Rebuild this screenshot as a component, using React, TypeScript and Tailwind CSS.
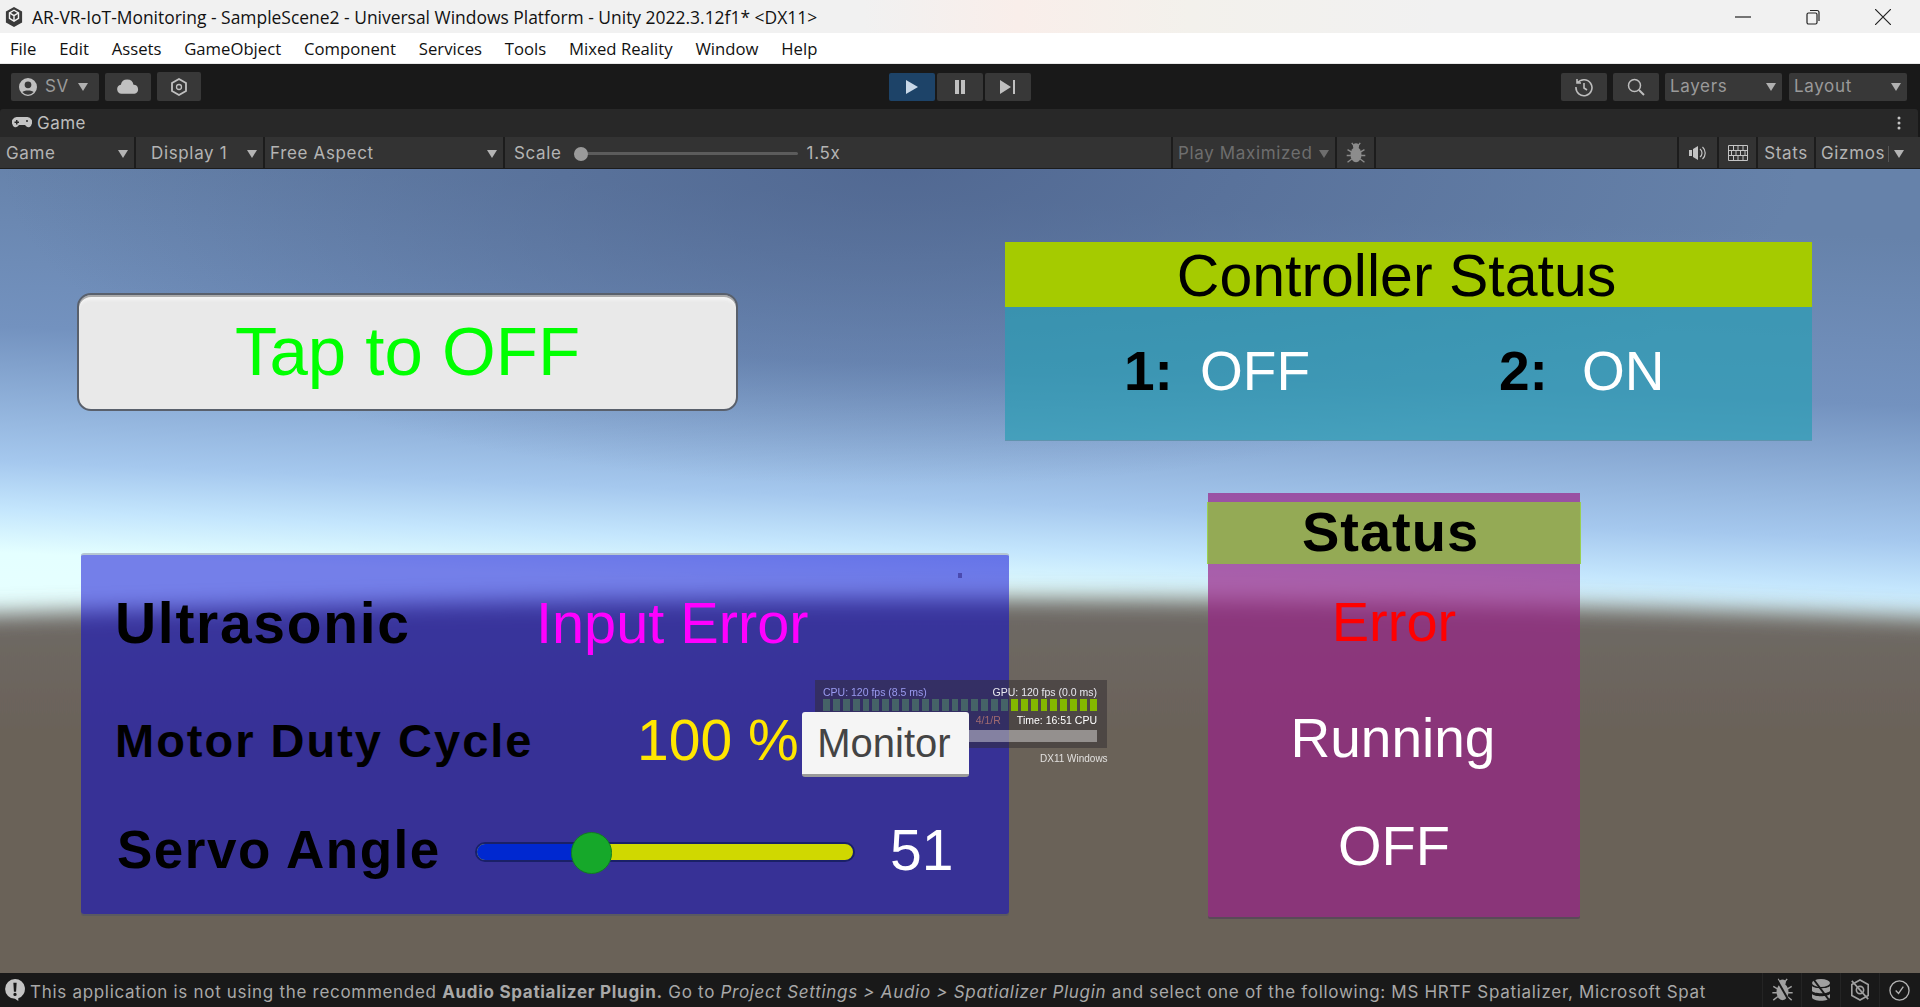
import type { ReactNode } from 'react';

const MENU = ['File', 'Edit', 'Assets', 'GameObject', 'Component', 'Services', 'Tools', 'Mixed Reality', 'Window', 'Help'];

function Caret({ className = '' }: { className?: string }) {
  return (
    <svg viewBox="0 0 10 8" className={`w-[10px] h-[8px] shrink-0 ${className}`} fill="currentColor">
      <path d="M0 0h10L5 8z" />
    </svg>
  );
}

function UnityLogo() {
  return (
    <svg viewBox="0 0 20 22" className="w-[18px] h-[20px] shrink-0">
      <path d="M10 0 19 5v12l-9 5-9-5V5z" fill="#3a3a3a" />
      <path d="M10 3.500 5 6.500v6l5 3 5-3v-6z" fill="none" stroke="#f1f1f1" strokeWidth="1.600" />
      <path d="M5 6.500l5 3 5-3M10 9.500v6" fill="none" stroke="#f1f1f1" strokeWidth="1.600" />
    </svg>
  );
}

function ToolButton({ className = '', active = false, children }: { className?: string; active?: boolean; children: ReactNode }) {
  return (
    <div className={`h-[28px] rounded-[2px] flex items-center shrink-0 ${active ? 'bg-[#1d4368]' : 'bg-[#383838]'} ${className}`}>
      {children}
    </div>
  );
}

function GameBarCell({ className = '', children }: { className?: string; children?: ReactNode }) {
  return <div className={`h-full bg-[#333333] flex items-center shrink-0 ${className}`}>{children}</div>;
}

function BugIcon({ className = '' }: { className?: string }) {
  return (
    <svg viewBox="0 0 22 26" className={className} fill="currentColor">
      <ellipse cx="11" cy="15" rx="6.500" ry="9" />
      <circle cx="11" cy="5" r="3.500" />
      <path d="M6 1l3 4M16 1l-3 4M1 9l5 3M21 9l-5 3M0 16h5M22 16h-5M1 24l5-4M21 24l-5-4" stroke="currentColor" strokeWidth="1.600" fill="none" />
    </svg>
  );
}

function SceneBackdrop() {
  return (
    <svg className="absolute inset-0 w-full h-full" viewBox="0 0 1920 804" preserveAspectRatio="none">
      <defs>
        <linearGradient id="sky" gradientUnits="userSpaceOnUse" x1="20" y1="-10" x2="0" y2="470">
          <stop offset="0" stop-color="#6682aa" />
          <stop offset="0.35" stop-color="#7392bf" />
          <stop offset="0.63" stop-color="#a5c8ee" />
          <stop offset="0.73" stop-color="#c4e6fd" />
          <stop offset="0.82" stop-color="#e4ffff" />
          <stop offset="1" stop-color="#e8ffff" />
        </linearGradient>
        <radialGradient id="dim" gradientUnits="userSpaceOnUse" cx="900" cy="-20" r="900" gradientTransform="scale(1 0.36)">
          <stop offset="0" stop-color="#4c628c" stop-opacity="0.8" />
          <stop offset="1" stop-color="#4c628c" stop-opacity="0" />
        </radialGradient>
        <linearGradient id="ground" gradientUnits="userSpaceOnUse" x1="0" y1="430" x2="0" y2="560">
          <stop offset="0" stop-color="#6e6a66" />
          <stop offset="1" stop-color="#6b6259" />
        </linearGradient>
        <filter id="horizon" filterUnits="userSpaceOnUse" x="-100" y="300" width="2120" height="600">
          <feGaussianBlur stdDeviation="0 11" />
        </filter>
      </defs>
      <rect width="1920" height="804" fill="url(#sky)" />
      <rect width="1920" height="804" fill="url(#dim)" />
      <path d="M-100 448 Q1010 408 2020 452 V900 H-100Z" fill="url(#ground)" filter="url(#horizon)" />
    </svg>
  );
}

function StatsOverlay() {
  return (
    <div className="absolute left-[815px] top-[511px] w-[292px] h-[68px] bg-[#302c30]/50 pl-[8px] pr-[10px] pt-[6px] font-['Liberation_Sans',sans-serif]">
      <div className="flex justify-between text-[10.500px] leading-[12px] blur-[0.5px]">
        <span className="text-[#9a9af0]">CPU: 120 fps (8.5 ms)</span>
        <span className="text-[#e8e8f0]">GPU: 120 fps (0.0 ms)</span>
      </div>
      <div className="mt-[1px] h-[12px] flex gap-[3px]">
        {Array.from({ length: 28 }).map((_, i) => (
          <div key={i} className={`flex-1 ${i < 19 ? 'bg-[#4a7068]/80' : 'bg-[#84b800]'}`} />
        ))}
      </div>
      <div className="flex justify-end text-[10.500px] leading-[12px] mt-[3px] blur-[0.4px]">
        <span className="text-[#a06a70] mr-[16px]">4/1/R</span>
        <span className="text-white">Time: 16:51 CPU</span>
      </div>
      <div className="mt-[4px] h-[12px] bg-white/40" />
    </div>
  );
}

export default function App() {
  return (
    <div className="w-[1920px] h-[1007px] flex flex-col overflow-hidden font-['Inter',sans-serif] text-[#bdbdbd]">
      {/* Window title */}
      <div className="h-[33px] shrink-0 flex items-center bg-[linear-gradient(90deg,#f1f1f1_45%,#f9eeea_53%,#f3f1ec_62%,#f1f1f1_75%)] pl-[5px] pr-[29px] font-['Open_Sans',sans-serif] text-[17.450px] text-[#111]">
        <UnityLogo />
        <span className="ml-[9px] pt-[1px]">AR-VR-IoT-Monitoring - SampleScene2 - Universal Windows Platform - Unity 2022.3.12f1* &lt;DX11&gt;</span>
        <div className="ml-auto flex items-center gap-[54px]">
          <svg viewBox="0 0 16 16" className="w-[16px] h-[16px]"><path d="M0 8h16" stroke="#222" strokeWidth="1.200" /></svg>
          <svg viewBox="0 0 16 16" className="w-[16px] h-[16px]" fill="none" stroke="#222" strokeWidth="1.200"><rect x="2" y="4" width="10" height="11" rx="1.500" /><path d="M5 1.500h7a2 2 0 0 1 2 2V12" /></svg>
          <svg viewBox="0 0 16 16" className="w-[16px] h-[16px]"><path d="M0 0l16 16M16 0L0 16" stroke="#222" strokeWidth="1.200" /></svg>
        </div>
      </div>

      {/* Menu */}
      <div className="h-[30px] shrink-0 bg-white flex items-center pl-[10px] pt-[2px] gap-[22.800px] font-['Open_Sans',sans-serif] text-[16.700px] text-[#111]">
        {MENU.map((m) => (
          <span key={m}>{m}</span>
        ))}
      </div>

      {/* Main toolbar */}
      <div className="h-[46px] shrink-0 bg-[#191919] border-t border-[#e8e8e8] flex items-center pl-[11px] pr-[13px] text-[17px] tracking-[0.65px] text-[#9a9a9a]">
        <ToolButton className="w-[88px] pl-[8px] gap-[8px]">
          <svg viewBox="0 0 16 16" className="w-[18px] h-[18px]" fill="#c0c0c0">
            <path fillRule="evenodd" d="M8 0a8 8 0 1 1 0 16A8 8 0 0 1 8 0zM8 3a3 3 0 1 0 0 6 3 3 0 0 0 0-6zM3 12.500a6.500 6.500 0 0 0 10 0C12 10.500 4 10.500 3 12.500z" />
          </svg>
          <span className="pt-[1px]">SV</span>
          <Caret className="text-[#b0b0b0] ml-[1px]" />
        </ToolButton>
        <ToolButton className="w-[46px] ml-[6px] justify-center">
          <svg viewBox="0 0 24 16" className="w-[22px] h-[15px]" fill="#c0c0c0">
            <path d="M5 16a5 5 0 0 1-.800-9.900A7 7 0 0 1 18 6.100 5 5 0 0 1 19 16z" />
          </svg>
        </ToolButton>
        <ToolButton className="w-[44px] ml-[6px] h-[29px] justify-center">
          <svg viewBox="0 0 16 18" className="w-[16px] h-[18px]" fill="none" stroke="#c0c0c0" strokeWidth="1.800">
            <path d="M8 1l7 4v8l-7 4-7-4V5z" />
            <circle cx="8" cy="9" r="2.500" strokeWidth="1.300" />
          </svg>
        </ToolButton>
        <div className="ml-[688px] flex gap-[2px]">
          <ToolButton active className="w-[46px] justify-center">
            <svg viewBox="0 0 12 14" className="w-[12px] h-[14px]" fill="#c8d8e8"><path d="M0 0l12 7-12 7z" /></svg>
          </ToolButton>
          <ToolButton className="w-[46px] justify-center">
            <svg viewBox="0 0 12 14" className="w-[12px] h-[14px]" fill="#c0c0c0"><path d="M1 0h4v14H1zM7 0h4v14H7z" /></svg>
          </ToolButton>
          <ToolButton className="w-[46px] justify-center">
            <svg viewBox="0 0 16 14" className="w-[16px] h-[14px]" fill="#c0c0c0"><path d="M0 0l11 7-11 7zM13 0h2v14h-2z" /></svg>
          </ToolButton>
        </div>
        <ToolButton className="w-[46px] ml-auto justify-center">
          <svg viewBox="0 0 20 20" className="w-[20px] h-[20px]" fill="none" stroke="#bdbdbd" strokeWidth="1.600">
            <path d="M3.500 6A8 8 0 1 1 2 10M3 2v4h4M10 6v5l3 2" />
          </svg>
        </ToolButton>
        <ToolButton className="w-[46px] ml-[6px] justify-center">
          <svg viewBox="0 0 20 20" className="w-[20px] h-[20px]" fill="none" stroke="#bdbdbd" strokeWidth="1.500">
            <circle cx="8.500" cy="8.500" r="6" />
            <path d="M13 13l5 5" strokeWidth="2" />
          </svg>
        </ToolButton>
        <ToolButton className="w-[117px] ml-[6px] pl-[5px] pr-[6px] justify-between">
          <span className="pt-[1px]">Layers</span>
          <Caret className="text-[#b0b0b0]" />
        </ToolButton>
        <ToolButton className="w-[118px] ml-[7px] pl-[5px] pr-[6px] justify-between">
          <span className="pt-[1px]">Layout</span>
          <Caret className="text-[#b0b0b0]" />
        </ToolButton>
      </div>

      {/* Tab row */}
      <div className="h-[28px] shrink-0 bg-[#191919]">
        <div className="h-full mr-[2px] bg-[#282828] rounded-t-[3px] flex items-center pl-[12px] pr-[17px] text-[17px] tracking-[0.5px] text-[#bdbdbd]">
          <svg viewBox="0 0 20 12" className="w-[20px] h-[12px]" fill="#c4c4c4">
            <path fillRule="evenodd" d="M5 0h10a5 5 0 0 1 4.500 7.500 3 3 0 0 1-5 2L13 8H7L5.500 9.500a3 3 0 0 1-5-2A5 5 0 0 1 5 0zM4 3v1.500H2.500V6H4v1.500h1.500V6H7V4.500H5.500V3zM15 3a1 1 0 1 0 0 2 1 1 0 0 0 0-2z" />
          </svg>
          <span className="ml-[5px] pt-[2px]">Game</span>
          <svg viewBox="0 0 4 14" className="ml-auto w-[4px] h-[14px]" fill="#c4c4c4">
            <circle cx="2" cy="2" r="1.500" /><circle cx="2" cy="7" r="1.500" /><circle cx="2" cy="12" r="1.500" />
          </svg>
        </div>
      </div>

      {/* Game view toolbar */}
      <div className="h-[32px] shrink-0 bg-[#1c1c1c] flex pb-[1px] gap-[2px] text-[17px] tracking-[0.65px] text-[#b4b4b4]">
        <GameBarCell className="w-[134px] pl-[6px] pr-[6px] pt-[2px] justify-between">
          <span>Game</span>
          <Caret />
        </GameBarCell>
        <GameBarCell className="w-[127px] pl-[15px] pr-[6px] pt-[2px] justify-between">
          <span>Display 1</span>
          <Caret />
        </GameBarCell>
        <GameBarCell className="w-[238px] pl-[5px] pr-[6px] pt-[2px] justify-between">
          <span>Free Aspect</span>
          <Caret />
        </GameBarCell>
        <GameBarCell className="w-[666px] pl-[9px] pt-[2px]">
          <span>Scale</span>
          <span className="relative ml-[12px] w-[224px] h-[3px] bg-[#5c5c5c] rounded-full">
            <span className="absolute left-0 -top-[5.500px] w-[14px] h-[14px] rounded-full bg-[#9a9a9a]" />
          </span>
          <span className="ml-[9px]">1.5x</span>
        </GameBarCell>
        <GameBarCell className="w-[162px] pl-[5px] pr-[6px] pt-[2px] justify-between text-[#6e6e6e]">
          <span>Play Maximized</span>
          <Caret />
        </GameBarCell>
        <GameBarCell className="w-[37px] justify-center">
          <BugIcon className="w-[20px] h-[22px] text-[#8c8c8c]" />
        </GameBarCell>
        <GameBarCell className="w-[301px]" />
        <GameBarCell className="w-[38px] justify-center">
          <svg viewBox="0 0 20 16" className="w-[20px] h-[16px]" fill="#c4c4c4">
            <path d="M1 5h3v6H1zM5 4l5-3v14l-5-3z" />
            <path d="M12 4a5 5 0 0 1 0 8M14.500 2a8 8 0 0 1 0 12" stroke="#c4c4c4" strokeWidth="1.200" fill="none" />
          </svg>
        </GameBarCell>
        <GameBarCell className="w-[37px] justify-center">
          <svg viewBox="0 0 20 16" className="w-[20px] h-[16px]" fill="none" stroke="#c4c4c4" strokeWidth="1">
            <path d="M.5.500h19v15H.500zM.5 5.500h19M.5 10.500h19M5.500.500v5M10 .500v5M15 .500v5M3.500 5.500v5M8 5.500v5M12.500 5.500v5M17 5.500v5M5.500 10.500v5M10 10.500v5M15 10.500v5" />
          </svg>
        </GameBarCell>
        <GameBarCell className="w-[56px] pt-[2px] justify-center">Stats</GameBarCell>
        <GameBarCell className="flex-1 pl-[5px] pr-[4px] pt-[2px]">
          <span>Gizmos</span>
          <span className="ml-[3px] w-px h-[16px] bg-[#555]" />
          <Caret className="ml-[5px]" />
        </GameBarCell>
      </div>

      {/* Game scene */}
      <div className="relative flex-1 min-h-0 flex font-['Liberation_Sans',sans-serif]">
        <SceneBackdrop />

        <div className="relative w-[1005px] shrink-0 pl-[77px] pt-[124px]">
          <div className="w-[661px] h-[118px] rounded-[14px] border-2 border-[#59606c] bg-[#e9e9e9] shadow-[inset_0_2px_0_#aaaaaa,inset_0_7px_3px_-2px_#f4f4f4] flex items-center justify-center text-[69px] text-[#00ff00]">
            Tap to OFF
          </div>

          <div className="relative w-[928px] h-[361px] ml-[4px] mt-[142px] rounded-[3px] border-t-2 border-[#b6c7d2] bg-[#0400d4]/50 shadow-[0_2px_0_#5a5a60] pl-[34px] pt-[40px] text-black">
            <div className="flex items-baseline h-[56px]">
              <span className="w-[421px] text-[57px] leading-[56px] font-bold tracking-[1.700px]">Ultrasonic</span>
              <span className="text-[57.700px] leading-[56px] text-[#ff00ff]">Input Error</span>
            </div>
            <div className="flex items-baseline h-[56px] mt-[58px]">
              <span className="w-[522px] text-[47px] leading-[56px] font-bold tracking-[2px]">Motor Duty Cycle</span>
              <span className="text-[57px] leading-[56px] text-[#ffe600] translate-y-[3px]">100 %</span>
            </div>
            <div className="flex items-center h-[56px] mt-[57px]">
              <span className="w-[358px] ml-[2px] text-[53px] leading-[56px] font-bold tracking-[1.500px]">Servo Angle</span>
              <div className="relative w-[380px] h-[20px] mt-[4px] rounded-full border-2 border-[#1a2068] bg-[#d0d800]">
                <div className="h-full w-[120px] rounded-l-full bg-[#0028d0]" />
                <div className="absolute left-[94px] -top-[12px] w-[41px] h-[42px] rounded-full bg-[#16a82a] border border-[#127a24]" />
              </div>
              <span className="ml-[35px] text-[57px] leading-[56px] text-white">51</span>
            </div>
            <div className="absolute left-[877px] top-[18px] w-[4px] h-[5px] bg-[#4a4ab0]" />
          </div>
        </div>

        <div className="relative flex-1 pt-[73px]">
          <div className="w-[807px] h-[198px] bg-[#2a9cb4]/70 shadow-[0_1px_0_#5f93ad]">
            <div className="h-[65px] bg-[#a5cb00] flex items-center justify-center pt-[4px] pr-[24px] text-[59px] leading-[65px] text-black">
              Controller Status
            </div>
            <div className="flex items-baseline pl-[119px] pt-[36px] text-[55px] leading-[56px]">
              <span className="w-[76px] font-bold text-black">1:</span>
              <span className="w-[299px] text-white">OFF</span>
              <span className="w-[83px] font-bold text-black">2:</span>
              <span className="text-white">ON</span>
            </div>
          </div>

          <div className="w-[372px] h-[424px] ml-[203px] mt-[53px] bg-[#992287]/70 text-center text-white rounded-b-[2px] shadow-[0_2px_0_#5a4a58]">
            <div className="h-[9px]" />
            <div className="h-[62px] -mx-[1px] border-x border-[#9ad050] bg-[#94aa55] pr-[7px] text-[56px] leading-[60px] font-bold text-black tracking-[1px]">Status</div>
            <div className="mt-[30px] text-[56px] leading-[56px] text-[#ff0000]">Error</div>
            <div className="mt-[60px] pr-[2px] text-[55px] leading-[56px]">Running</div>
            <div className="mt-[52px] text-[56px] leading-[56px]">OFF</div>
          </div>
        </div>

        <StatsOverlay />

        <button className="absolute left-[802px] top-[543px] w-[167px] h-[65px] rounded-[3px] bg-[#f5f5f5] border-b-[3px] border-[#9a9a9a] pr-[3px] text-[40px] text-[#444444]">
          Monitor
        </button>

        <div className="absolute left-[1040px] top-[585px] text-[10px] leading-[10px] text-white opacity-80 blur-[0.5px]">DX11 Windows</div>
      </div>

      {/* Status bar */}
      <div className="h-[34px] shrink-0 bg-[#191919] flex items-center pl-[5px] pr-[2px] text-[17px] tracking-[0.7px] text-[#a8a8a8]">
        <svg viewBox="0 0 18 20" className="w-[20px] h-[22px] shrink-0" fill="#c4c4c4">
          <path fillRule="evenodd" d="M9 0a9 9 0 0 1 3 17.500V20l-3-2A9 9 0 0 1 9 0zM7.500 3.500l.5 8h2l.5-8zM9 12.500a1.500 1.500 0 1 0 0 3 1.500 1.500 0 0 0 0-3z" />
        </svg>
        <span className="ml-[5px] pt-[5px] whitespace-nowrap">
          This application is not using the recommended <b>Audio Spatializer Plugin.</b> Go to <i>Project Settings &gt; Audio &gt; Spatializer Plugin</i> and select one of the following: MS HRTF Spatializer, Microsoft Spat
        </span>
        <div className="ml-auto flex items-center h-full">
          <div className="w-[39px] h-full border-l border-[#242424] flex items-center justify-center">
            <div className="relative">
              <BugIcon className="w-[21px] h-[24px] text-[#a0a0a0]" />
              <span className="absolute left-[10px] -top-[1px] h-[27px] w-[2px] -rotate-[30deg] bg-[#191919]" />
            </div>
          </div>
          <div className="w-[39px] h-full border-l border-[#242424] flex items-center justify-center">
            <svg viewBox="0 0 20 22" className="w-[20px] h-[22px]" fill="#a0a0a0"><ellipse cx="10" cy="4" rx="9" ry="4" /><path d="M1 7c2 3 16 3 18 0v5c-2 3-16 3-18 0zM1 15c2 3 16 3 18 0v3c0 5-18 5-18 0z" /><path d="M3 1l15 20" stroke="#191919" strokeWidth="2" /></svg>
          </div>
          <div className="w-[39px] h-full border-l border-[#242424] flex items-center justify-center">
            <svg viewBox="0 0 22 24" className="w-[20px] h-[22px]" fill="none" stroke="#a0a0a0" strokeWidth="1.800"><path d="M11 1l9 5v12l-9 5-9-5V6z" /><circle cx="11" cy="12" r="4" /><path d="M2 2l18 20" /></svg>
          </div>
          <div className="w-[39px] h-full border-l border-[#242424] flex items-center justify-center">
            <svg viewBox="0 0 22 22" className="w-[21px] h-[21px]" fill="none" stroke="#b4b4b4" strokeWidth="1.400"><circle cx="11" cy="11" r="10" /><path d="M7 11l3 3 5-7" /></svg>
          </div>
        </div>
      </div>
    </div>
  );
}
